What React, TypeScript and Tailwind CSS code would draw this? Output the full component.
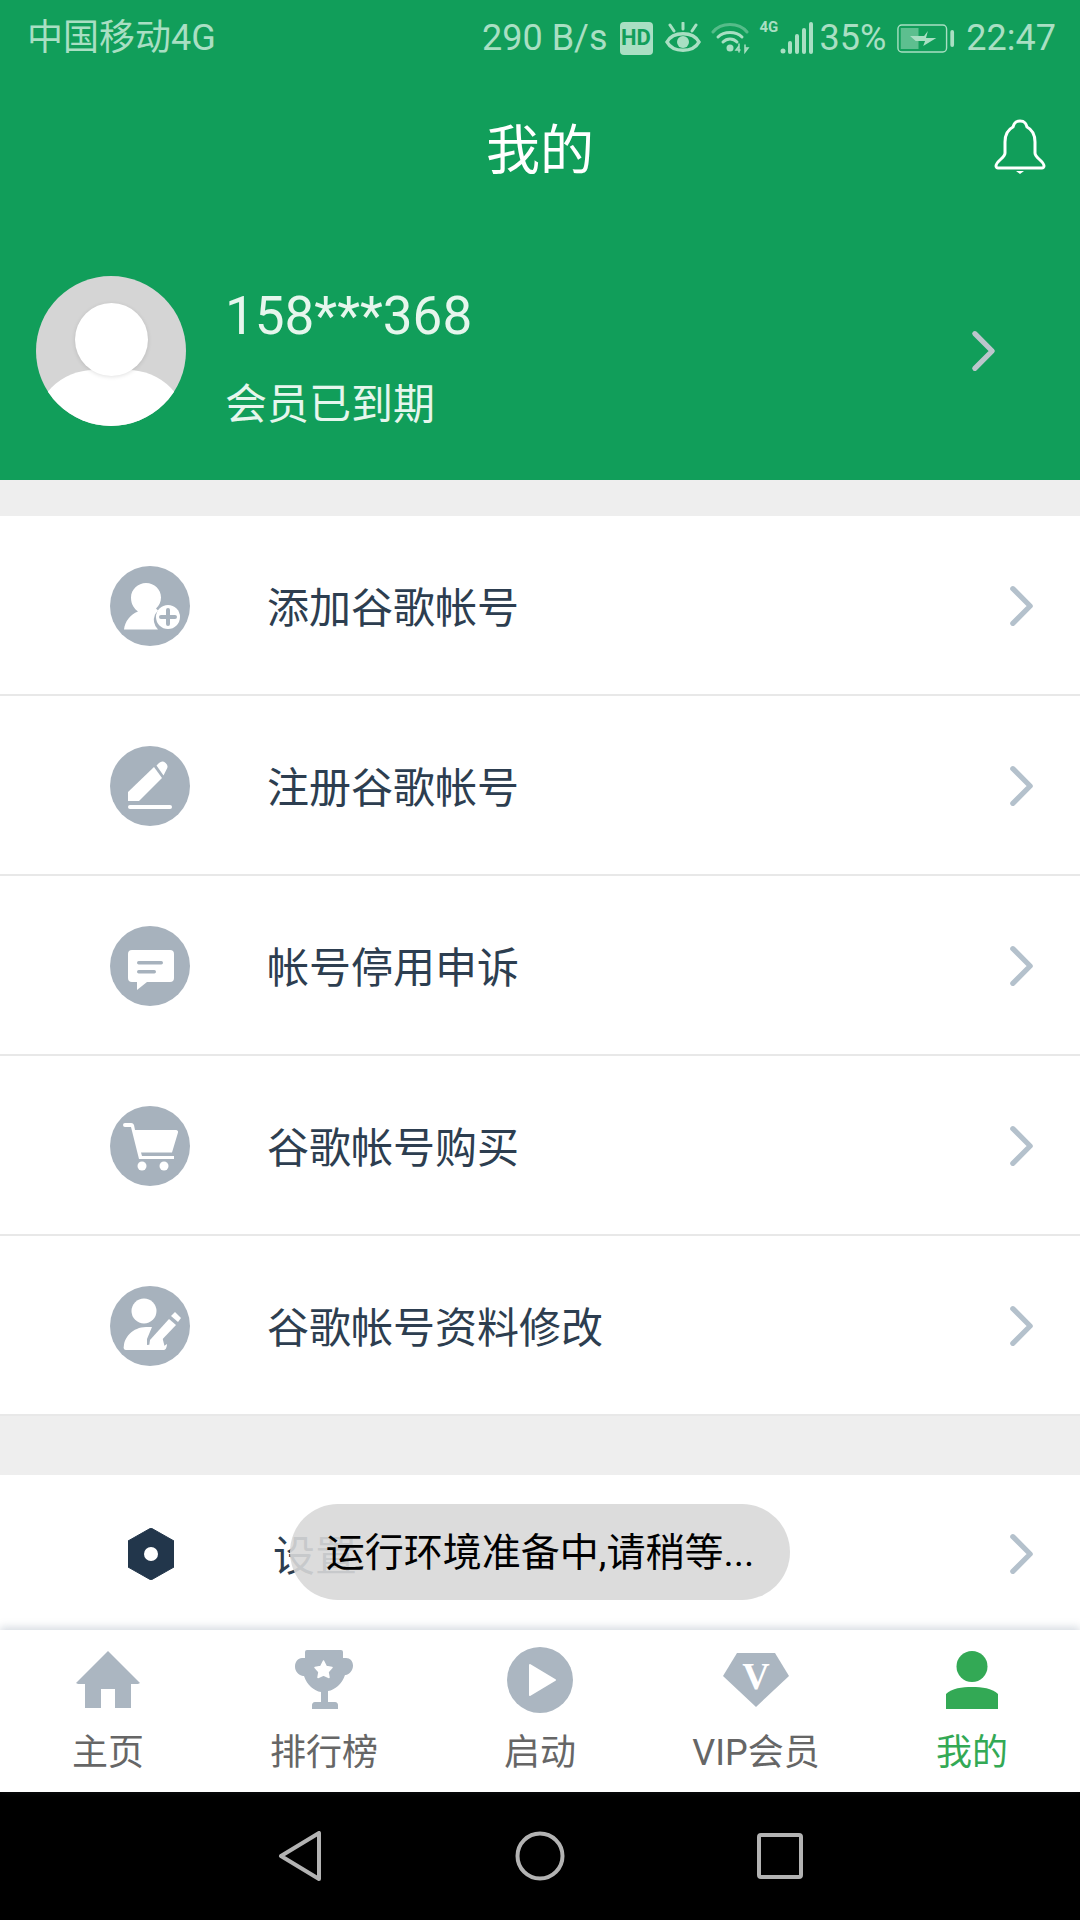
const FONT = { fontFamily: 'Roboto, "Noto Sans CJK SC", sans-serif' };

function Chevron({ className }: { className: string }) {
  return (
    <svg viewBox="0 0 26 44" className={className} fill="none" stroke="currentColor" strokeWidth="5.500" strokeLinecap="round" strokeLinejoin="round">
      <path d="M4 4 L22 22 L4 40" />
    </svg>
  );
}

function AddUser() {
  return (
    <svg viewBox="0 0 80 80" className="w-20 h-20">
      <circle cx="40" cy="40" r="40" fill="#a7b2bd" />
      <path d="M36 17c8.500 0 15 6.500 15 14.500 0 4.500-2 8.500-5 11l2 2-3 4a14 14 0 0 0 3 15H14c1-8 6-15 14-18-3-2.500-7-6-7-14 0-8 7-14.500 15-14.500z" fill="#fff" />
      <circle cx="58" cy="51" r="12" fill="#fff" />
      <path d="M58 44v14M51 51h14" stroke="#a7b2bd" strokeWidth="4" strokeLinecap="round" />
    </svg>
  );
}
function Pen() {
  return (
    <svg viewBox="0 0 80 80" className="w-20 h-20">
      <circle cx="40" cy="40" r="40" fill="#a7b2bd" />
      <path d="M18 46 L44 21 L52 32 L29 55 H18 Z" fill="#fff" />
      <path d="M46.500 19.500 L49 17 a5 5 0 0 1 7.500 6.500 L53.500 29.500 Z" fill="#fff" />
      <rect x="18" y="59" width="44" height="4" rx="2" fill="#fff" />
    </svg>
  );
}
function Chat() {
  return (
    <svg viewBox="0 0 80 80" className="w-20 h-20">
      <circle cx="40" cy="40" r="40" fill="#a7b2bd" />
      <path d="M22 24h38a4 4 0 0 1 4 4v24a4 4 0 0 1-4 4H37L27 64v-8h-5a4 4 0 0 1-4-4V28a4 4 0 0 1 4-4z" fill="#fff" />
      <rect x="27" y="35" width="26" height="3.500" rx="1.700" fill="#a7b2bd" />
      <rect x="27" y="44" width="19" height="3.500" rx="1.700" fill="#a7b2bd" />
    </svg>
  );
}
function Cart() {
  return (
    <svg viewBox="0 0 80 80" className="w-20 h-20">
      <circle cx="40" cy="40" r="40" fill="#a7b2bd" />
      <path d="M15 17h6a3 3 0 0 1 3 2l1 5h41a2 2 0 0 1 2 2.500l-6 20H31l1 3.500h32v3H29L21 21h-6a2 2 0 0 1 0-4z" fill="#fff" />
      <circle cx="32" cy="60" r="4.500" fill="#fff" />
      <circle cx="54" cy="60" r="4.500" fill="#fff" />
    </svg>
  );
}
function EditUser() {
  return (
    <svg viewBox="0 0 80 80" className="w-20 h-20">
      <circle cx="40" cy="40" r="40" fill="#a7b2bd" />
      <circle cx="34" cy="25" r="12.500" fill="#fff" />
      <path d="M14 62c-1-10 9-21 22-21l6 0-5 12v6l8-1 7-8 3 12z" fill="#fff" />
      <path d="M36 52v8h18l3-2c0 2-1 6-3 6H16c-2 0-3-2-2-4" fill="#fff" />
      <path d="M40 54 L59 33 L66 39 L46 60 L39 61 Z" fill="#fff" />
      <path d="M61 30 L65 26 L71 32 L68 36 Z" fill="#fff" />
    </svg>
  );
}
function Gear() {
  return (
    <svg viewBox="0 0 46 52" className="w-[46px] h-[52px]">
      <path d="M23 0 L46 13 V39 L23 52 L0 39 V13 Z" fill="#22364b" stroke="#22364b" strokeLinejoin="round" />
      <circle cx="23" cy="26" r="7" fill="#fff" />
    </svg>
  );
}

const rows = [
  { Icon: AddUser, label: '添加谷歌帐号' },
  { Icon: Pen, label: '注册谷歌帐号' },
  { Icon: Chat, label: '帐号停用申诉' },
  { Icon: Cart, label: '谷歌帐号购买' },
  { Icon: EditUser, label: '谷歌帐号资料修改' },
];

function Home() {
  return (
    <svg viewBox="0 0 64 58" className="w-16 h-[58px]" fill="#abb6c1">
      <path d="M32 0 L64 32 L62 33 H55 V57 H39 V38 H25 V57 H9 V33 H2 L0 32 Z" />
    </svg>
  );
}
function Trophy() {
  return (
    <svg viewBox="0 0 58 60" className="w-[58px] h-[60px]" fill="#abb6c1">
      <path d="M10 2a2 2 0 0 1 2-2h34a2 2 0 0 1 2 2v6h3c4 0 7 3 7 7.500s-3 8.500-7 9.500h-1c-3 9-10 15-17 16v11h7c2 0 3 1.500 3 3v4H17v-4c0-1.500 1-3 3-3h6V42c-7-1-14-7-17-16H8c-5-1-8-5-8-9.500S3 8 7 8h3z" />
      <path d="M28.500 11 L31.300 16.500 L37 17.500 L33 22 L34 27.500 L28.500 25 L23 27.500 L24 22 L20 17.500 L25.700 16.500 Z" fill="#fff" stroke="#fff" strokeWidth="1.500" strokeLinejoin="round" />
    </svg>
  );
}
function Play() {
  return (
    <svg viewBox="0 0 66 66" className="w-[66px] h-[66px]">
      <circle cx="33" cy="33" r="33" fill="#abb6c1" />
      <path d="M23 18 L48 33 L23 48 Z" fill="#fff" stroke="#fff" strokeWidth="2" strokeLinejoin="round" />
    </svg>
  );
}
function Vip() {
  return (
    <svg viewBox="0 0 66 54" className="w-[66px] h-[54px]">
      <path d="M14 0 H52 L66 23 L33 54 L0 23 Z" fill="#abb6c1" />
      <text x="33" y="36" textAnchor="middle" fontSize="38" fontWeight="700" fill="#fff" style={{ fontFamily: '"Liberation Serif", serif' }}>V</text>
    </svg>
  );
}
function Me() {
  return (
    <svg viewBox="0 0 52 58" className="w-[52px] h-[58px]" fill="#33a955">
      <circle cx="26" cy="15.500" r="15.500" />
      <path d="M0 43 C6 37 16 36 26 36 C36 36 46 37 52 43 V58 H0 Z" />
    </svg>
  );
}

const tabs = [
  { Icon: Home, label: '主页', active: false },
  { Icon: Trophy, label: '排行榜', active: false },
  { Icon: Play, label: '启动', active: false },
  { Icon: Vip, label: 'VIP会员', active: false },
  { Icon: Me, label: '我的', active: true },
];

function StatusBar() {
  return (
    <div className="h-[76px] flex items-center justify-between pl-[27px] pr-[24px] text-[#a9dfc3] text-[36px]">
      <span>中国移动4G</span>
      <div className="flex items-center">
        <span className="mr-3">290 B/s</span>
        <span className="w-[33px] h-[33px] mr-3 rounded-[4px] bg-[#a9dfc3] text-[#129e5a] text-[22px] font-bold leading-none flex items-center justify-center">HD</span>
        <svg viewBox="0 0 36 32" className="w-[36px] h-8 mr-[10px]" fill="none" stroke="#a9dfc3" strokeWidth="3.500">
          <path d="M2 20 C8 9 28 9 34 20 C28 31 8 31 2 20 Z" />
          <circle cx="18" cy="20" r="6" fill="#a9dfc3" stroke="none" />
          <path d="M18 1v6M5 3l4 6M31 3l-4 6" strokeLinecap="round" strokeWidth="3" />
        </svg>
        <svg viewBox="0 0 40 32" className="w-10 h-8 mr-[9px]" fill="none" stroke="#a9dfc3" strokeLinecap="round">
          <path d="M2 10 C10 0 28 0 36 10" strokeWidth="3" opacity=".45" />
          <path d="M7 15 C13 9 25 9 31 15" strokeWidth="3" />
          <path d="M12 20 C16 16 22 16 26 20" strokeWidth="3" />
          <circle cx="19" cy="26" r="3.500" fill="#a9dfc3" stroke="none" />
          <path d="M28 24l-3 4h4M28 22v8M34 23v7l3-4h-3" strokeWidth="1.500" />
        </svg>
        <div className="relative w-[54px] h-[34px] mr-[6px]">
          <span className="absolute left-0 top-[-1px] text-[15px] font-bold leading-none">4G</span>
          <svg viewBox="0 0 34 32" className="absolute right-0 top-0 w-[34px] h-[34px]" fill="#a9dfc3">
            <circle cx="3" cy="29" r="2.500" />
            <rect x="8" y="19" width="4" height="13" rx="2" />
            <rect x="15" y="12" width="4" height="20" rx="2" />
            <rect x="22" y="6" width="4" height="26" rx="2" />
            <rect x="29" y="0" width="4" height="32" rx="2" />
          </svg>
        </div>
        <span className="mr-[11px]">35%</span>
        <svg viewBox="0 0 62 30" className="w-[58px] h-[30px] mr-[11px]" preserveAspectRatio="none" fill="#a9dfc3">
          <rect x="1" y="2" width="52" height="27" rx="4" fill="none" stroke="#a9dfc3" strokeWidth="1.500" />
          <rect x="4" y="5" width="19" height="21" fill="#a9dfc3" opacity=".5" />
          <path d="M14 13 H29 L33 8 L31 15 H42 L28 23 L30 18 H20 Z" />
          <rect x="57" y="7" width="4" height="17" rx="2" />
        </svg>
        <span>22:47</span>
      </div>
    </div>
  );
}

export default function App() {
  return (
    <div className="relative w-[1080px] h-[1920px] flex flex-col bg-[#eeeeee] overflow-hidden" style={FONT}>
      <header className="bg-[#119e5a] h-[480px] flex flex-col">
        <StatusBar />
        <div className="relative h-[148px] flex items-center justify-center">
          <span className="text-[54px] leading-none text-white mt-1">我的</span>
          <svg viewBox="0 0 54 56" className="absolute right-[33px] top-[43px] w-[54px] h-[56px]" fill="none" stroke="#fff" strokeWidth="3" strokeLinejoin="round">
            <path d="M27 2 C32 2 33 5 34 8 C40 11 42 16 42 23 V34 C42 39 51 42 51 47 C51 48 50 49 49 49 H5 C4 49 3 48 3 47 C3 42 12 39 12 34 V23 C12 16 14 11 20 8 C21 5 22 2 27 2 Z" />
            <path d="M23 52 H31 L27 55 Z" fill="#fff" stroke="none" />
          </svg>
        </div>
        <div className="flex items-center pl-9 pr-[84px] mt-[52px]">
          <div className="relative w-[150px] h-[150px] rounded-full bg-[#d5d5d5] overflow-hidden shrink-0">
            <div className="absolute left-[-2px] top-[94px] w-[154px] h-[120px] rounded-full bg-white" />
            <div className="absolute left-[39px] top-[27px] w-[73px] h-[73px] rounded-full bg-white shadow-[0_1px_4px_rgba(0,0,0,0.12)]" />
          </div>
          <div className="ml-[39px] self-start pt-[10px] flex flex-col flex-1">
            <span className="text-[53px] leading-[60px] text-[#e6f6ed]">158***368</span>
            <span className="text-[42px] leading-[42px] text-[#e6f6ed] mt-[38px]">会员已到期</span>
          </div>
          <Chevron className="w-[25px] h-[46px] text-[#bcc6cc]" />
        </div>
      </header>
      <main className="mt-[36px] flex-1 flex flex-col">
        <div className="bg-white flex flex-col">
          {rows.map(({ Icon, label }) => (
            <div key={label} className="h-[180px] pl-[110px] pr-[46px] flex items-center border-b-2 border-[#e8e8e8] pt-px">
              <Icon />
              <span className="ml-[77px] mt-[5px] text-[42px] text-[#2d3e50] flex-1">{label}</span>
              <Chevron className="w-[25px] h-[44px] text-[#b4c1cc]" />
            </div>
          ))}
        </div>
        <div className="mt-[59px] flex-1 bg-white pl-[128px] pr-[46px] flex items-center pt-[3px]">
          <Gear />
          <span className="ml-[99px] mt-[5px] text-[42px] text-[#2d3e50] flex-1">设置</span>
          <Chevron className="w-[25px] h-[44px] text-[#b4c1cc]" />
        </div>
      </main>
      <nav className="relative h-[162px] bg-white grid grid-cols-5 shadow-[0_-3px_8px_rgba(110,130,150,0.28)]">
        {tabs.map(({ Icon, label, active }) => (
          <div key={label} className="flex flex-col items-center">
            <div className="h-[90px] flex items-center justify-center pt-[3px] mt-[3px]">
              <Icon />
            </div>
            <span className={`text-[36px] leading-[50px] mt-[5px] ${active ? 'text-[#33a955]' : 'text-[#666666]'}`}>{label}</span>
          </div>
        ))}
      </nav>
      <div className="h-[128px] bg-black flex items-center justify-center shrink-0">
        <div className="w-[240px] flex justify-center">
          <svg viewBox="0 0 44 50" className="w-[44px] h-[50px]" fill="none" stroke="#b3b3b3" strokeWidth="4" strokeLinejoin="round">
            <path d="M41 2 V48 L3 25 Z" />
          </svg>
        </div>
        <div className="w-[240px] flex justify-center">
          <svg viewBox="0 0 50 50" className="w-[50px] h-[50px]" fill="none" stroke="#b3b3b3" strokeWidth="4">
            <circle cx="25" cy="25" r="22.500" />
          </svg>
        </div>
        <div className="w-[240px] flex justify-center">
          <svg viewBox="0 0 46 46" className="w-[46px] h-[46px]" fill="none" stroke="#b3b3b3" strokeWidth="4" strokeLinejoin="round">
            <rect x="2" y="2" width="42" height="42" rx="2" />
          </svg>
        </div>
      </div>
      <div className="absolute left-[290px] top-[1504px] w-[500px] h-[96px] pt-[2px] rounded-[48px] bg-[#d8d8d8]/90 flex items-center justify-center text-[39px] text-black">
        运行环境准备中,请稍等...
      </div>
    </div>
  );
}
